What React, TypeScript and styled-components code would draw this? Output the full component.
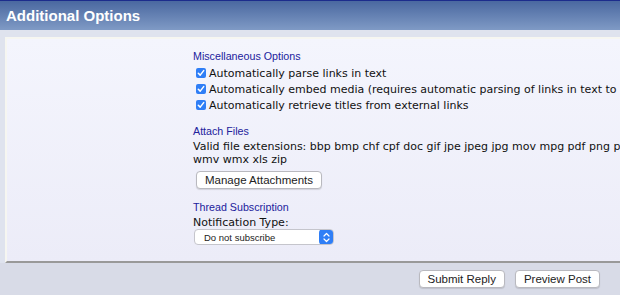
import React from 'react';
import styled, { createGlobalStyle } from 'styled-components';

const GlobalStyle = createGlobalStyle`
  html, body {
    margin: 0;
    padding: 0;
    overflow: hidden;
    background: #d8dbe7;
  }
  body {
    font-family: "DejaVu Sans", Verdana, sans-serif;
    width: 620px;
  }
`;

const Page = styled.div`
  width: 620px;
  height: 295px;
  overflow: hidden;
  background: #d8dbe7;
`;

const Header = styled.div`
  height: 29px;
  border-top: 1px solid #1c2c8c;
  background: linear-gradient(#4a68a0, #7f9ac5);
  display: flex;
  align-items: center;
  padding-left: 6px;
`;

const HeaderTitle = styled.h2`
  margin: 0;
  color: #fff;
  font: bold 15px "Liberation Sans", Arial, sans-serif;
`;

const Band = styled.div`
  background: #dfe3ee;
  padding: 7px 0 0 5px;
`;

const Panel = styled.div`
  width: 900px;
  height: 226px;
  box-sizing: border-box;
  background: linear-gradient(#f4f5fd, #ececf8);
  border-top: 2px solid #f6f6f1;
  border-left: 2px solid #f6f6f1;
  border-bottom: 2px solid #999;
  padding: 11px 0 0 186px;
`;

const Column = styled.div`
  width: 560px;
`;

const SectionTitle = styled.div`
  color: #22229c;
  font: 10.7px "Liberation Sans", Arial, sans-serif;
  line-height: 13px;
  margin-bottom: 2px;
`;

const Section = styled.div`
  margin-bottom: 12px;
`;

const CheckRow = styled.label`
  display: flex;
  align-items: center;
  gap: 3px;
  height: 16px;
  font-size: 11px;
  color: #111;
  white-space: nowrap;
  padding-left: 3px;
`;

const Box = styled.span`
  width: 10px;
  height: 10px;
  border-radius: 2px;
  background: #2f7ef6;
  display: inline-flex;
  align-items: center;
  justify-content: center;
  flex: none;
`;

const Text = styled.div<{ $width?: number }>`
  font-size: 11px;
  line-height: 13px;
  color: #111;
  max-width: ${p => (p.$width ? `${p.$width}px` : 'none')};
`;

const Button = styled.button`
  font: 11.5px "Liberation Sans", Arial, sans-serif;
  color: #222;
  background: #fff;
  border: 1px solid #b9b9bf;
  border-radius: 4px;
  height: 18px;
  padding: 0 8px;
  box-shadow: 0 1px 1px rgba(0, 0, 0, 0.12);
`;

const ButtonRow = styled.div`
  margin: 3px 0 0 3px;
`;

const SelectBox = styled.div`
  width: 140px;
  height: 16px;
  box-sizing: border-box;
  margin-left: 1px;
  background: #fff;
  border: 1px solid #c5c5cc;
  border-radius: 4px;
  display: flex;
  align-items: center;
  justify-content: space-between;
  font: 9.5px "Liberation Sans", Arial, sans-serif;
  color: #222;
  padding-left: 9px;
  overflow: hidden;
`;

const Stepper = styled.span`
  width: 15px;
  height: 16px;
  margin-right: -1px;
  background: #2f7ef6;
  border-radius: 4px;
  display: flex;
  align-items: center;
  justify-content: center;
`;

const Footer = styled.div`
  display: flex;
  justify-content: flex-end;
  gap: 10px;
  padding: 7px 20px 0 0;
`;

const Check = ({ label }: { label: string }) => (
  <CheckRow>
    <Box>
      <svg width="8" height="8" viewBox="0 0 8 8">
        <path d="M1.3 4.2 L3.2 6.1 L6.7 1.6" stroke="#fff" strokeWidth="1.5" fill="none" strokeLinecap="round" strokeLinejoin="round" />
      </svg>
    </Box>
    {label}
  </CheckRow>
);

const App: React.FC = () => (
  <Page>
    <GlobalStyle />
    <Header>
      <HeaderTitle>Additional Options</HeaderTitle>
    </Header>
    <Band>
      <Panel>
        <Column>
          <Section>
            <SectionTitle>Miscellaneous Options</SectionTitle>
            <Check label="Automatically parse links in text" />
            <Check label="Automatically embed media (requires automatic parsing of links in text to be enabled)" />
            <Check label="Automatically retrieve titles from external links" />
          </Section>
          <Section>
            <SectionTitle>Attach Files</SectionTitle>
            <Text $width={475}>Valid file extensions: bbp bmp chf cpf doc gif jpe jpeg jpg mov mpg pdf png psd txt wmv wmx xls zip</Text>
            <ButtonRow>
              <Button>Manage Attachments</Button>
            </ButtonRow>
          </Section>
          <Section>
            <SectionTitle>Thread Subscription</SectionTitle>
            <Text>Notification Type:</Text>
            <SelectBox>
              Do not subscribe
              <Stepper>
                <svg width="7" height="11" viewBox="0 0 7 11">
                  <path d="M1 4 L3.5 1.5 L6 4 M1 7 L3.5 9.5 L6 7" stroke="#fff" strokeWidth="1.2" fill="none" strokeLinecap="round" strokeLinejoin="round" />
                </svg>
              </Stepper>
            </SelectBox>
          </Section>
        </Column>
      </Panel>
    </Band>
    <Footer>
      <Button>Submit Reply</Button>
      <Button>Preview Post</Button>
    </Footer>
  </Page>
);

export default App;
